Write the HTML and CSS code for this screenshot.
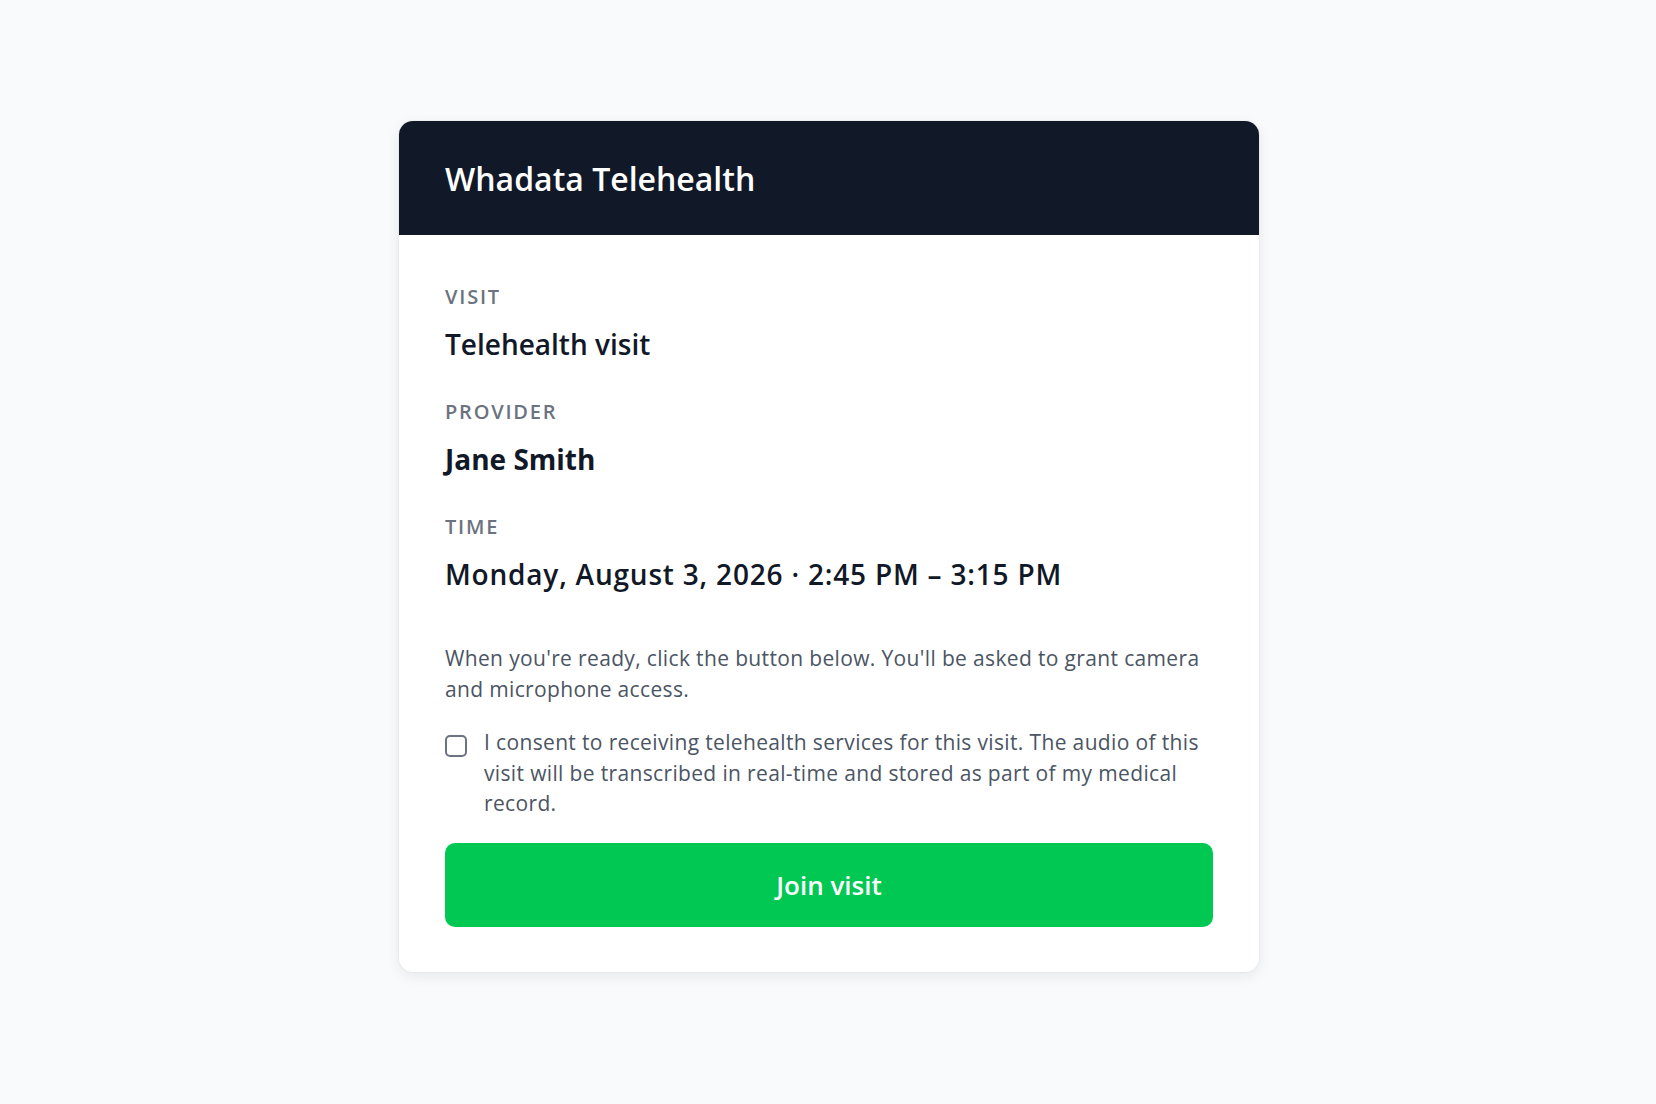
FILE: index.html
```html
<!DOCTYPE html>
<html lang="en">
<head>
    <meta charset="UTF-8">
    <meta name="viewport" content="width=device-width, initial-scale=1.0">
    <title>Whadata Telehealth - Join visit</title>
    <link rel="stylesheet" href="styles.css">
</head>
<body>
    <div class="card">
        <header class="card-header">
            <h1>Whadata Telehealth</h1>
        </header>

        <div class="card-body">
            <div class="detail">
                <div class="label">Visit</div>
                <div class="value">Telehealth visit</div>
            </div>
            <div class="detail">
                <div class="label">Provider</div>
                <div class="value strong">Jane Smith</div>
            </div>
            <div class="detail">
                <div class="label">Time</div>
                <div class="value time">Monday, August 3, 2026 &middot; 2:45 PM &ndash; 3:15 PM</div>
            </div>

            <p class="hint">When you're ready, click the button below. You'll be asked to grant camera and microphone access.</p>

            <label class="consent">
                <input type="checkbox" id="consent">
                <span>I consent to receiving telehealth services for this visit. The audio of this visit will be transcribed in real-time and stored as part of my medical record.</span>
            </label>

            <button type="button" class="join-btn">Join visit</button>
        </div>
    </div>
</body>
</html>
```

FILE: styles.css
```css
* {
    margin: 0;
    padding: 0;
    box-sizing: border-box;
    font-family: 'Open Sans', 'Noto Sans', sans-serif;
}

body {
    background: #f9fafb;
    min-height: 100vh;
    padding: 121px 0 0 2px;
    color: #111827;
}

.card {
    width: 860px;
    margin: 0 auto;
    background: #fff;
    border-radius: 14px;
    overflow: hidden;
    box-shadow: 0 4px 14px rgba(17, 24, 39, 0.08), 0 0 0 1px rgba(17, 24, 39, 0.03);
}

.card-header {
    background: #111827;
    height: 114px;
    padding: 0 46px;
    display: flex;
    align-items: center;
}

.card-header h1 {
    color: #fff;
    font-size: 32px;
    font-weight: 600;
}

.card-body {
    padding: 48px 46px 45px;
}

.detail + .detail {
    margin-top: 36px;
}

.label {
    font-size: 20px;
    line-height: 28px;
    font-weight: 600;
    letter-spacing: 1.8px;
    text-transform: uppercase;
    color: #6b7280;
}

.value {
    margin-top: 15px;
    font-size: 28px;
    line-height: 36px;
    font-weight: 600;
    color: #111827;
}

.value.strong {
    font-weight: 700;
}

.value.time {
    letter-spacing: 0.8px;
}

.hint {
    margin-top: 51px;
    font-size: 21px;
    line-height: 30.6px;
    letter-spacing: 0.35px;
    color: #4b5563;
}

.consent {
    margin-top: 23px;
    display: flex;
    gap: 17px;
    font-size: 21px;
    line-height: 30.6px;
    letter-spacing: 0.35px;
    color: #4b5563;
    cursor: pointer;
}

.consent input {
    appearance: none;
    flex: none;
    width: 22px;
    height: 22px;
    margin-top: 8px;
    border: 2px solid #6b7280;
    border-radius: 5px;
    background: #fff;
    cursor: pointer;
}

.consent input:checked {
    background: #00c853;
    border-color: #00c853;
}

.join-btn {
    display: block;
    width: 100%;
    height: 84px;
    margin-top: 24px;
    border: none;
    border-radius: 10px;
    background: #00c853;
    color: #fff;
    font-size: 26px;
    font-weight: 600;
    cursor: pointer;
}

.join-btn:hover {
    background: #00b34a;
}
```
